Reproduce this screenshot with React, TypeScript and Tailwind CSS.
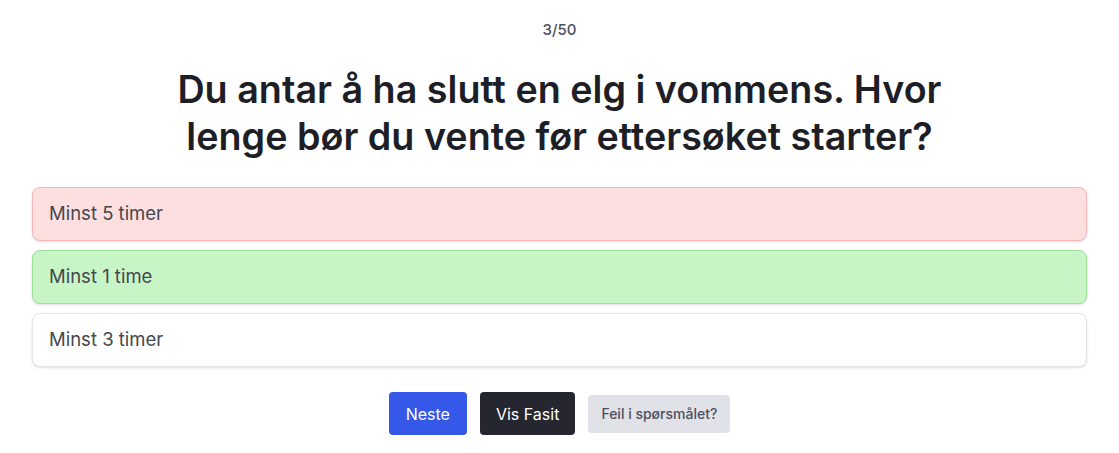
import React from 'react'

const options = [
  { id: 'a', label: 'Minst 5 timer', state: 'wrong' as const },
  { id: 'b', label: 'Minst 1 time', state: 'right' as const },
  { id: 'c', label: 'Minst 3 timer', state: 'idle' as const },
]

const stateClass = {
  wrong: 'bg-[#fddfe0] border-[#f6b8b9]',
  right: 'bg-[#c8f5c6] border-[#9ee09a]',
  idle: 'bg-white border-[#e5e7eb]',
}

export default function App() {
  return (
    <div className="min-h-screen bg-white font-['Inter',_'Liberation_Sans',_sans-serif] px-8 pt-[20px]">
      <p className="text-center text-[15px] font-medium text-[#4b5060] leading-[20px]">3/50</p>

      <h1 className="mx-auto mt-[26px] max-w-[820px] text-center text-[37.7px] font-semibold leading-[47px] text-[#1d1e26]">
        Du antar å ha slutt en elg i vommens. Hvor lenge bør du vente før ettersøket starter?
      </h1>

      <div className="mt-[27px] flex flex-col gap-[9px]">
        {options.map((o) => (
          <button
            key={o.id}
            className={`h-[54px] w-full rounded-lg border px-4 text-left text-[18.5px] text-[#44464f] shadow-sm ${stateClass[o.state]}`}
          >
            {o.label}
          </button>
        ))}
      </div>

      <div className="mt-[25px] flex items-center justify-center gap-[13px]">
        <button className="h-[43px] rounded-[4px] bg-[#3558e8] px-[17px] text-base text-white">Neste</button>
        <button className="h-[43px] rounded-[4px] bg-[#25262f] px-[16px] text-base text-white">Vis Fasit</button>
        <button className="h-[38px] rounded-[4px] bg-[#e1e2e7] px-[13px] text-[14px] font-medium text-[#4b5060]">
          Feil i spørsmålet?
        </button>
      </div>
    </div>
  )
}
